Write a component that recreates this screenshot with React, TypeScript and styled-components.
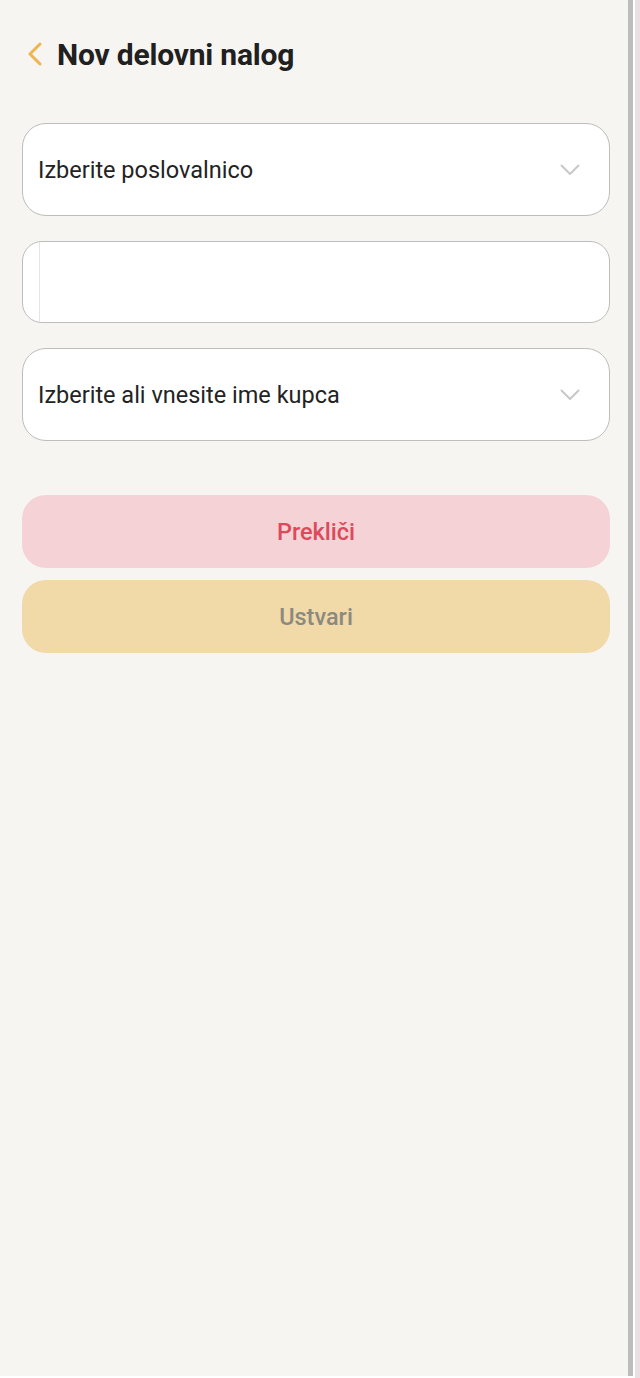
import { FC } from "react";
import styled, { createGlobalStyle } from "styled-components";

const GlobalStyle = createGlobalStyle`
  html, body {
    margin: 0;
    padding: 0;
    background: #f6f5f1;
  }
  body {
    font-family: Roboto, "Noto Sans", "Liberation Sans", sans-serif;
    color: #212121;
  }
`;

const Frame = styled.div`
  display: flex;
  height: 1378px;
  overflow: hidden;
`;

const Screen = styled.div`
  flex: 1;
  display: flex;
  flex-direction: column;
  background: #f6f5f1;
  border-bottom: 2px solid #ffffff;
`;

const Track = styled.div`
  width: 5px;
  background: #bdbdbd;
  border-right: 2px solid #ffffff;
  border-bottom: 2px solid #ffffff;
`;

const Edge = styled.div`
  width: 5px;
  background: #e9e0e4;
`;

const Header = styled.header`
  display: flex;
  align-items: center;
  gap: 14px;
  padding: 38px 18px 0 27px;
  height: 32px;
`;

const BackButton = styled.button`
  display: flex;
  align-items: center;
  border: none;
  background: none;
  padding: 0;
  cursor: pointer;
`;

const Title = styled.h1`
  margin: 0;
  font-size: 30px;
  font-weight: 700;
  letter-spacing: -0.2px;
  color: #202020;
`;

const Form = styled.div`
  display: flex;
  flex-direction: column;
  gap: 25px;
  padding: 53px 18px 0 22px;
`;

const Field = styled.div<{ $tall?: boolean }>`
  display: flex;
  align-items: center;
  justify-content: space-between;
  height: ${(p) => (p.$tall ? 91 : 80)}px;
  padding: 0 29px 0 15px;
  background: #ffffff;
  border: 1px solid #bdbdbd;
  border-radius: ${(p) => (p.$tall ? 24 : 20)}px;
`;

const FieldText = styled.span`
  font-size: 23.5px;
  color: #232323;
`;

const Caret = styled.div`
  align-self: stretch;
  width: 1px;
  margin-left: 1px;
  background: #e4e4e4;
`;

const Actions = styled.div`
  display: flex;
  flex-direction: column;
  gap: 12px;
  padding: 54px 18px 0 22px;
`;

const Button = styled.button<{ $variant: "cancel" | "create" }>`
  height: 73px;
  border: none;
  border-radius: 24px;
  font-family: inherit;
  font-size: 23.5px;
  font-weight: 500;
  background: ${(p) => (p.$variant === "cancel" ? "#f5d2d6" : "#f1d9a8")};
  color: ${(p) => (p.$variant === "cancel" ? "#dc4a5c" : "#8c897f")};
`;

const Chevron: FC = () => (
  <svg width="20" height="12" viewBox="0 0 20 12" fill="none">
    <path
      d="M1.5 1.5 L10 10 L18.5 1.5"
      stroke="#c8c8c8"
      strokeWidth="2"
      strokeLinecap="round"
      strokeLinejoin="round"
    />
  </svg>
);

const BackIcon: FC = () => (
  <svg width="16" height="24" viewBox="0 0 16 24" fill="none">
    <path
      d="M13 2 L3 12 L13 22"
      stroke="#efb552"
      strokeWidth="3"
      strokeLinecap="round"
      strokeLinejoin="round"
    />
  </svg>
);

const App: FC = () => {
  return (
    <>
      <GlobalStyle />
      <Frame>
        <Screen>
          <Header>
            <BackButton aria-label="Nazaj">
              <BackIcon />
            </BackButton>
            <Title>Nov delovni nalog</Title>
          </Header>
          <Form>
            <Field $tall>
              <FieldText>Izberite poslovalnico</FieldText>
              <Chevron />
            </Field>
            <Field>
              <Caret />
            </Field>
            <Field $tall>
              <FieldText>Izberite ali vnesite ime kupca</FieldText>
              <Chevron />
            </Field>
          </Form>
          <Actions>
            <Button $variant="cancel">Prekliči</Button>
            <Button $variant="create">Ustvari</Button>
          </Actions>
        </Screen>
        <Track />
        <Edge />
      </Frame>
    </>
  );
};

export default App;
